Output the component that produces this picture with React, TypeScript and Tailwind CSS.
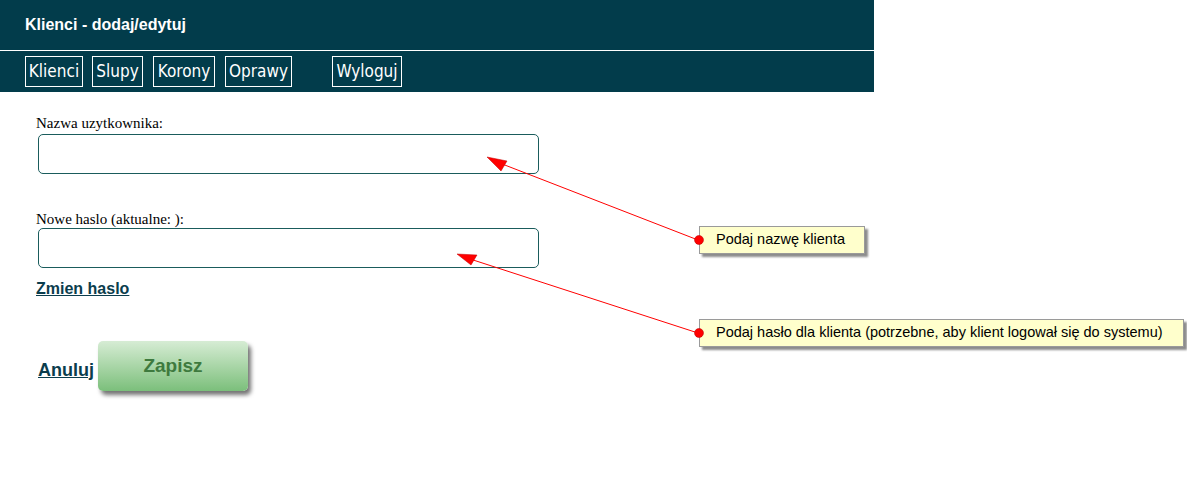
import React from "react";

export default function App() {
  const navItems = [
    { label: "Klienci", w: "w-[58px]", ml: "" },
    { label: "Slupy", w: "w-[51px]", ml: "ml-[9px]" },
    { label: "Korony", w: "w-[62px]", ml: "ml-[10px]" },
    { label: "Oprawy", w: "w-[67px]", ml: "ml-[10px]" },
  ];
  return (
    <div className="relative w-[1187px] h-[477px] bg-white overflow-hidden">
      <div className="w-[874px] h-[50px] bg-[#023c4b] flex items-center pl-[25px]">
        <span className="text-white font-bold text-[16px] font-['Liberation_Sans',Arial,sans-serif] pb-[1px]">
          Klienci - dodaj/edytuj
        </span>
      </div>
      <div className="w-[874px] h-[41px] mt-[1px] bg-[#023c4b] flex items-start pt-[5px] pl-[25px]">
        {navItems.map((n) => (
          <div
            key={n.label}
            className={`${n.w} ${n.ml} h-[31px] border border-white flex items-center justify-center text-white text-[17px] font-['Liberation_Sans_Narrow','DejaVu_Sans_Condensed',sans-serif]`}
          >
            {n.label}
          </div>
        ))}
        <div className="w-[70px] h-[31px] ml-[40px] border border-white flex items-center justify-center text-white text-[17px] font-['Liberation_Sans_Narrow','DejaVu_Sans_Condensed',sans-serif]">
          Wyloguj
        </div>
      </div>

      <div className="pl-[36px] pt-[21px] font-['Liberation_Serif','Times_New_Roman',serif] text-[15px] text-black">
        <div className="leading-[20px]">Nazwa uzytkownika:</div>
        <div className="ml-[2px] mt-[1px] w-[501px] h-[40px] border border-[#1a5c5c] rounded-[5px]" />
        <div className="leading-[20px] mt-[35px]">Nowe haslo (aktualne: ):</div>
        <div className="ml-[2px] mt-[-1px] w-[501px] h-[40px] border border-[#1a5c5c] rounded-[5px]" />
        <div className="mt-[11px] font-['Liberation_Sans',Arial,sans-serif] font-bold text-[16px] leading-[20px] text-[#0b3d4d] underline">
          Zmien haslo
        </div>
        <div className="flex items-center mt-[42px] ml-[2px]">
          <span className="font-['Liberation_Sans',Arial,sans-serif] font-bold text-[18px] text-[#0b3d4d] underline mt-[8px]">
            Anuluj
          </span>
          <div className="ml-[4px] w-[150px] h-[50px] rounded-[5px] bg-gradient-to-b from-[#d6ecd4] to-[#7bbf7b] shadow-[3px_4px_4px_rgba(0,0,0,0.55)] flex items-center justify-center font-['Liberation_Sans',Arial,sans-serif] font-bold text-[19px] text-[#3e7a3e]">
            Zapisz
          </div>
        </div>
      </div>

      <svg className="absolute left-0 top-0" width="1187" height="477">
        <line x1="698" y1="240" x2="497" y2="162" stroke="#ff0000" strokeWidth="1" />
        <polygon points="487,157 507,161 501,171" fill="#ff0000" stroke="#c00000" strokeWidth="0.5" />
        <line x1="698" y1="333" x2="467" y2="258" stroke="#ff0000" strokeWidth="1" />
        <polygon points="457,254 477,255 471,265" fill="#ff0000" stroke="#c00000" strokeWidth="0.5" />
      </svg>

      <div className="absolute left-[699px] top-[226px] w-[166px] h-[28px] bg-[#ffffcc] border border-[#9a9a9a] shadow-[3px_3px_2px_rgba(0,0,0,0.45)] flex items-center pl-[16px] font-['Liberation_Sans',Arial,sans-serif] text-[14.5px] text-black">
        Podaj nazwę klienta
      </div>
      <div className="absolute left-[699px] top-[319px] w-[485px] h-[28px] bg-[#ffffcc] border border-[#9a9a9a] shadow-[3px_3px_2px_rgba(0,0,0,0.45)] flex items-center pl-[16px] font-['Liberation_Sans',Arial,sans-serif] text-[14.5px] text-black">
        Podaj hasło dla klienta (potrzebne, aby klient logował się do systemu)
      </div>
      <svg className="absolute left-0 top-0 pointer-events-none" width="1187" height="477">
        <circle cx="699" cy="240" r="4.5" fill="#ff0000" stroke="#b00000" strokeWidth="0.5" />
        <circle cx="699" cy="333" r="4.5" fill="#ff0000" stroke="#b00000" strokeWidth="0.5" />
      </svg>
    </div>
  );
}
